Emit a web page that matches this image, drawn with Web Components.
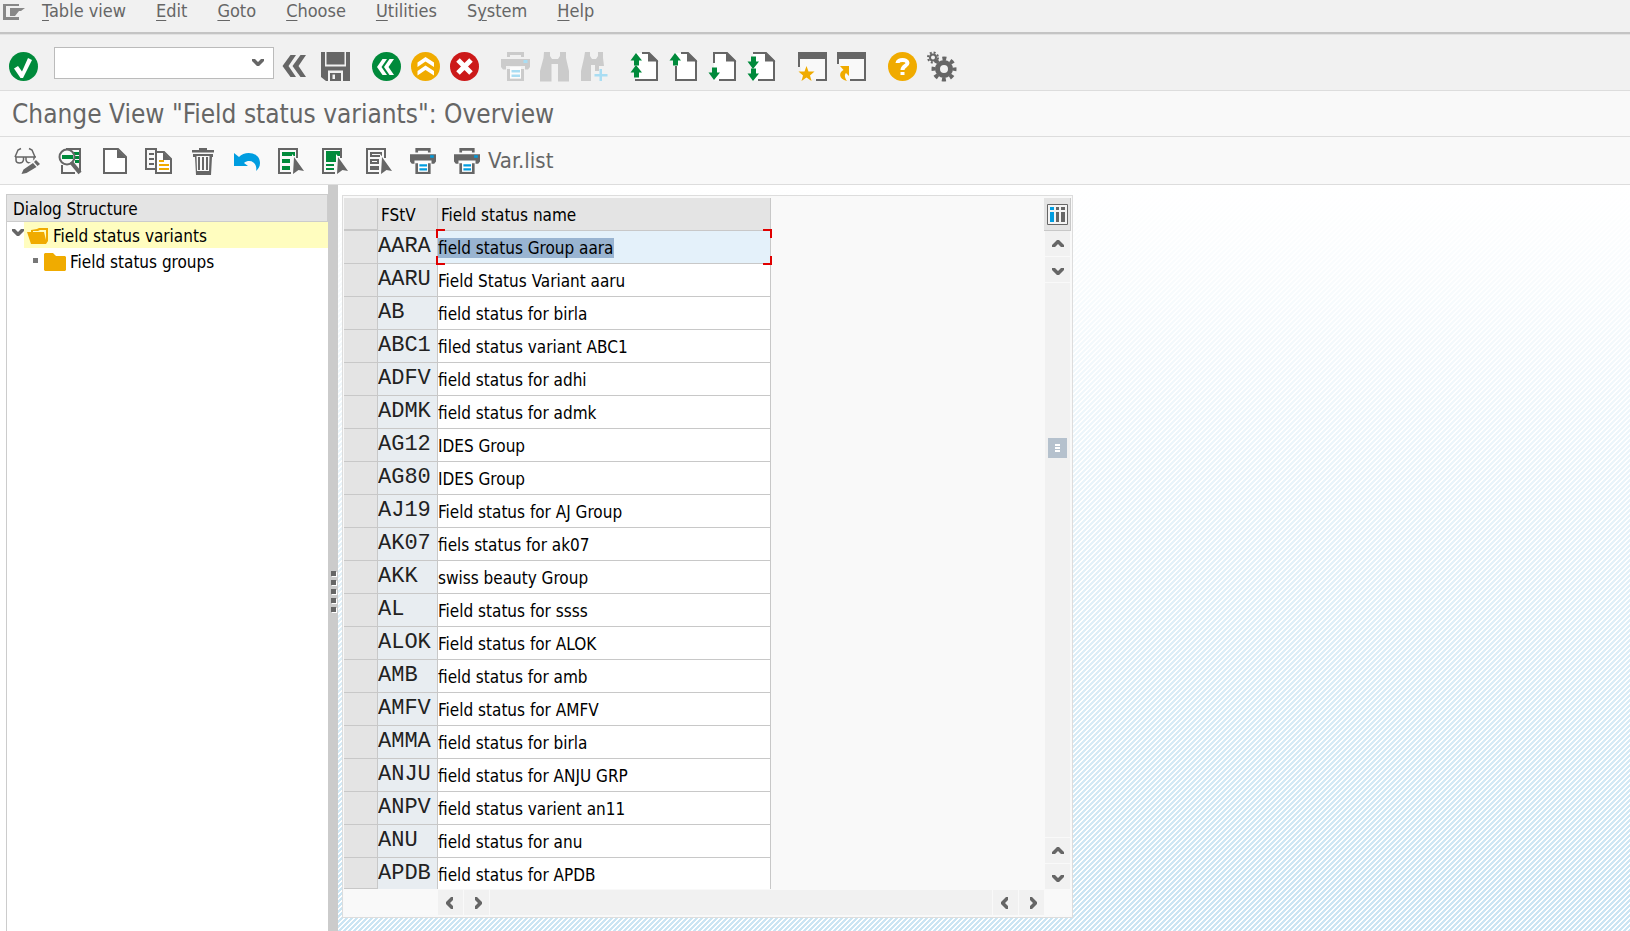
<!DOCTYPE html>
<html lang="en">
<head>
<meta charset="utf-8">
<title>Change View "Field status variants": Overview</title>
<style>
  html, body { margin: 0; }
  body { background: #fff; color: #666; font: 17px/22px "DejaVu Sans Condensed", "DejaVu Sans", Tahoma, sans-serif; }
</style>
</head>
<body>
<sap-window></sap-window>
<script>
const G = '#666', GR = '#008a3b', OR = '#f0ab00', BL = '#009de0';

const arrowUp = (x, y) => `<path fill="${GR}" d="M${x} ${y}l6 7.500h-3v5h-5v-5h-3.500z"/>`;
const arrowDown = (x, y) => `<path fill="${GR}" d="M${x} ${y}l6-7.500h-3v-5h-5v5h-3.500z"/>`;
const page = (x, w) => `<path fill="#fff" d="M${x} 1h${w - 9}l9 8v19.500h-${w}z"/><path fill="${G}" d="M${x + w - 10} 0l10.500 9.500h-10.500z"/>`;
const printer = (a, b) => `<path fill="${a}" d="M6 0h17v5h-3v-2h-11v2h-3zM0 7h29v8l-2 2.500h-3v-3.500h-19v3.500h-3l-2-2.500z"/><path fill="${a}" d="M6 17h3v9.500h11v-9.500h3v12h-17z"/><path fill="#fff" d="M9 15h11v11.500h-11z" opacity=".8"/><path fill="${b}" d="M22.500 8h4v3h-4zM10.500 18h8.500v2.500h-8.500zM10.500 22.500h8.500v2.500h-8.500z"/>`;
const cursor = `<path fill="#f9f9f9" d="M14 6v20h12v-6z"/><path fill="${G}" d="M16 9l10 14-5.500-1-5.500 4z"/>`;
const listFrame = `<path fill="none" stroke="${G}" stroke-width="2" d="M19 10v-9h-18v24h12"/>`;
const CHEVRON = 'M0 0h3l3 3 3-3h3v2l-5 5h-2l-5-5z';

const ICONS = {
  enter: `<circle cx="14.500" cy="14.500" r="14.500" fill="${GR}"/><path fill="#fff" d="M5 16.500l4-2.500 4 5.500 6-13.500 4 2-9 18h-2.500z"/>`,
  collapse: `<path fill="${G}" d="M8.500 3h5.500l-7.500 11 7.500 11h-5.500l-8-11zM18.500 3h5.500l-7.500 11 7.500 11h-5.500l-8-11z"/>`,
  save: `<path fill="${G}" d="M0 0h29v29h-24l-5-4z"/><path fill="#f1f1f1" d="M4 0h1.500v12.500h18v-12.500h1.500v14.500h-21zM7 18.500h15v10.500h-2v-8h-11v8h-2z"/><path fill="#f1f1f1" d="M11.500 22.500h2.500v4.500h-2.500z"/>`,
  back: `<circle cx="14.500" cy="14.500" r="14.500" fill="${GR}"/><path fill="#fff" d="M10.500 7h4.500l-5.500 8 5.500 8h-4.500l-5.500-8zM17.500 7h4.500l-5.500 8 5.500 8h-4.500l-5.500-8z"/>`,
  exit: `<circle cx="14.500" cy="14.500" r="14.500" fill="${OR}"/><path fill="#fff" d="M14.500 5l8.500 5.500v4.500l-8.500-5.500-8 5.500v-4.500zM14.500 13.500l8.500 5.500v4.500l-8.500-5.500-8 5.500v-4.500z"/>`,
  cancel: `<circle cx="14.500" cy="14.500" r="14.500" fill="#cc1919"/><path stroke="#fff" stroke-width="5" d="M8 8l13 13M21 8l-13 13"/>`,
  printOff: printer('#cbcbcb', '#a9ddf3'),
  find: `<path fill="#cbcbcb" d="M4 0h6v4l2 3h6l2-3v-4h6v6l3 13v10.500h-11v-17.500h-6.500v17.500h-11.500v-10.500l3.500-13z"/>`,
  findNext: `<path fill="#cbcbcb" d="M6 0h5v4l2 3h4l2-3v-4h5v6l1 8h-5v5h-4v-6h-4v16h-10v-10l3-13z"/><path fill="#a9ddf3" d="M20.500 17h2.500v5h5.500v2.500h-5.500v4.500h-2.500v-4.500h-5v-2.500h5z"/>`,
  first: page(6, 22) + `<path fill="none" stroke="${G}" stroke-width="2" d="M12 1h7l8 8v19h-22"/>` + arrowUp(6, 1) + arrowUp(6, 13),
  prev: page(6, 22) + `<path fill="none" stroke="${G}" stroke-width="2" d="M12 1h7l8 8v19h-20v-14"/>` + arrowUp(6, 1),
  next: page(6, 22) + `<path fill="none" stroke="${G}" stroke-width="2" d="M6 11v-10h13l8 8v19h-16"/>` + arrowDown(6, 28),
  last: page(6, 22) + `<path fill="none" stroke="${G}" stroke-width="2" d="M6 1h13l8 8v19h-16"/>` + arrowDown(6, 17) + arrowDown(6, 29),
  session: `<path fill="#f9f9f9" d="M1 1h27v27h-27z"/><path fill="${G}" d="M0 0h29v29h-11v-2h9v-20h-25v8h-2z"/><path fill="#f1f1f1" d="M0 15h3v14h-3zM3 27h14v2h-14z"/><path fill="${OR}" d="M8.500 14l2 5.500h6l-4.500 4 1.500 5.500-5-3.500-5 3.500 1.500-5.500-4.500-4h6z"/>`,
  shortcut: `<path fill="#f9f9f9" d="M1 1h27v27h-27z"/><path fill="${G}" d="M0 0h29v29h-16v-2h14v-20h-25v5h-2z"/><path fill="#f1f1f1" d="M0 12h3v17h-3z"/><path fill="${OR}" d="M3 14h9v10l-3-3c-2 2-1 5 1 8-9-2-8-9-3.500-11z"/>`,
  help: `<circle cx="14.500" cy="14.500" r="14.500" fill="${OR}"/><path fill="none" stroke="#fff" stroke-width="4" d="M9.500 11c0-4 10-4 10 0 0 3-5 3-5 7"/><path fill="#fff" d="M12.500 20h4v3h-4z"/>`,
  settings: `<circle cx="17" cy="17" r="6.500" fill="none" stroke="${G}" stroke-width="5"/><circle cx="17" cy="17" r="10.500" fill="none" stroke="${G}" stroke-width="4" stroke-dasharray="4 4.250" stroke-dashoffset="2"/><circle cx="6" cy="5.500" r="3" fill="none" stroke="${G}" stroke-width="2"/><circle cx="6" cy="5.500" r="5" fill="none" stroke="${G}" stroke-width="2" stroke-dasharray="2 1.930"/>`,
  toggle: `<path fill="none" stroke="${G}" stroke-width="1.500" d="M1 9h21M2 9v3q0 3 3.500 3t4-3v-3M12 9v3q.5 3 4 3t4-3v-3M1 9l3-7 3-1.500M21 9l-3-7-3-1.500"/><path fill="#f9f9f9" d="M21 11l-12 9v5h10l7-6z"/><path fill="${G}" d="M22 12l4 4-2.500 2-3.500-4zM19 15l3.500 4-10 6-5 1 2-4.500z"/>`,
  details: `<path fill="none" stroke="${G}" stroke-width="2" d="M8 1h14v22M4 17v8h13"/><path fill="${GR}" d="M16 4h5v3h-5zM17 8h4v3h-4zM17 12h4v3h-4z"/><circle cx="9" cy="9" r="7.500" fill="#f9f9f9" stroke="${G}" stroke-width="2"/><path fill="${GR}" d="M4 7h11v4h-11z"/><path stroke="${G}" stroke-width="4" d="M13 14l9 11"/>`,
  create: `<path fill="#fff" stroke="${G}" stroke-width="2" d="M2 1h14l8 8v16h-22z"/><path fill="${G}" d="M15 1l9 9h-9z"/>`,
  copy: `<path fill="none" stroke="${G}" stroke-width="2" d="M9 21h-9v-20h10v4"/><path fill="${G}" d="M3 5h5v2h-5zM3 10h5v2h-5zM3 15h5v2h-5z"/><path fill="#fff" stroke="${G}" stroke-width="2" d="M10 4h8l7 7v14h-15z"/><path fill="${G}" d="M17 4l8 8h-8z"/><path fill="${OR}" d="M13 12h5v2h-5zM13 16h10v2h-10zM13 20h10v2h-10z"/>`,
  remove: `<path fill="${G}" d="M9 0h8v2h7v2.500h-22v-2.500h7zM3 6h20v3h-1l-1 18h-15l-1-18h-2z"/><path fill="#f9f9f9" d="M6.500 8h13l-.5 15h-12z"/><path fill="${G}" d="M8 9h2v13h-2zM12 9h2v13h-2zM16 9h2v13h-2z"/>`,
  undo: `<path fill="${BL}" d="M0 5l5 4c6-7 21-5 21 6 0 4-2 6-4 8 2-8-6-13-12-8l4 3h-14z"/>`,
  selectAll: listFrame + `<path fill="${GR}" d="M4 4h13v4h-13zM4 11h8v4h-8zM4 18h8v4h-8z"/>` + cursor,
  selectBlock: listFrame + `<path fill="${GR}" d="M4 3h14v5h-3v6h-11zM4 16h8v2h-8zM4 20h8v2h-8z"/>` + cursor,
  deselect: listFrame + `<path fill="none" stroke="${G}" stroke-width="2" d="M5 5h10v3h-10zM5 12h7v3h-7zM5 19h7v2h-7z"/>` + cursor,
  print: printer(G, BL)
};

class SapIcon extends HTMLElement {
  connectedCallback() {
    const box = this.getAttribute('box') || '29 29';
    this.attachShadow({ mode: 'open' }).innerHTML =
      `<style>:host{display:block;flex:none}svg{display:block;width:100%;height:100%;overflow:visible}</style>
       <svg viewBox="0 0 ${box}" aria-hidden="true">${ICONS[this.getAttribute('name')]}</svg>`;
  }
}
customElements.define('sap-icon', SapIcon);

class SapTool extends HTMLElement {
  connectedCallback() {
    const name = this.getAttribute('icon'), box = this.getAttribute('box') || '29 29';
    this.attachShadow({ mode: 'open' }).innerHTML =
      `<style>
        :host{display:block;flex:none}
        button{display:flex;align-items:center;gap:8px;margin:0;padding:0;border:0;background:none;font:inherit;color:inherit;white-space:nowrap}
        sap-icon{width:var(--icon,29px);height:var(--icon,29px)}
      </style>
      <button type="button" aria-label="${this.getAttribute('label')}"><sap-icon name="${name}" box="${box}"></sap-icon><slot></slot></button>`;
  }
}
customElements.define('sap-tool', SapTool);

class SapMenuBar extends HTMLElement {
  connectedCallback() {
    const items = [['', 'T', 'able view'], ['', 'E', 'dit'], ['', 'G', 'oto'], ['', 'C', 'hoose'], ['', 'U', 'tilities'], ['S', 'y', 'stem'], ['', 'H', 'elp']];
    this.attachShadow({ mode: 'open' }).innerHTML =
      `<style>
        :host{display:flex;align-items:flex-start;height:32px;padding-left:3px;background:#f1f1f1;border-bottom:2px solid #c4c4c4;box-shadow:0 1px #e2e2e2;margin-bottom:1px;font-size:18px}
        svg{display:block;width:22px;height:17px;margin:4px 17px 0 0;flex:none}
        nav{display:flex;gap:30px}
        a{color:inherit;text-decoration:none;line-height:22px}
        u{text-underline-offset:3px;text-decoration-thickness:1px}
      </style>
      <svg viewBox="0 0 22 17" aria-hidden="true"><path fill="#888" d="M0 0h16v2h-13v11h13v3h-16zM7 4h15l-4 3h-2l-4 5h-5z"/></svg>
      <nav>${items.map(([a, k, b]) => `<a href="#">${a}<u>${k}</u>${b}</a>`).join('')}</nav>`;
  }
}
customElements.define('sap-menu-bar', SapMenuBar);

class SapCommandBar extends HTMLElement {
  connectedCallback() {
    const groups = [
      [['back', 'Back'], ['exit', 'Exit'], ['cancel', 'Cancel']],
      [['printOff', 'Print'], ['find', 'Find'], ['findNext', 'Find next']],
      [['first', 'First page'], ['prev', 'Previous page'], ['next', 'Next page'], ['last', 'Last page']],
      [['session', 'New session'], ['shortcut', 'Create shortcut']],
      [['help', 'Help'], ['settings', 'Customize layout']]
    ];
    this.attachShadow({ mode: 'open' }).innerHTML =
      `<style>
        :host{display:flex;align-items:center;box-sizing:border-box;height:56px;padding:8px 9px 0;background:#f1f1f1;border-bottom:1px solid #ddd}
        .cmd{display:flex;align-items:center;box-sizing:border-box;width:220px;height:32px;margin:0 8px 8px 16px;background:#fff;border:1px solid #bbb}
        input{flex:1;min-width:0;height:28px;border:0;padding:0 6px;background:none;font:inherit;outline:0}
        .cmd button{width:30px;height:28px;border:0;padding:0;background:none}
        .cmd svg{display:block;width:12px;height:8px;margin:auto}
        .group{display:flex;gap:10px}
        .group + .group{margin-left:22px}
      </style>
      <sap-tool icon="enter" label="Enter"></sap-tool>
      <div class="cmd"><input type="text" aria-label="Command"><button type="button" aria-label="Command history"><svg viewBox="0 0 12 8"><path fill="#666" d="${CHEVRON}"/></svg></button></div>
      <div class="group"><sap-tool icon="collapse" label="Hide command field"></sap-tool><sap-tool icon="save" label="Save"></sap-tool></div>
      ${groups.map(g => `<div class="group">${g.map(([i, l]) => `<sap-tool icon="${i}" label="${l}"></sap-tool>`).join('')}</div>`).join('')}`;
  }
}
customElements.define('sap-command-bar', SapCommandBar);

class SapTitle extends HTMLElement {
  connectedCallback() {
    this.attachShadow({ mode: 'open' }).innerHTML =
      `<style>
        :host{display:block;background:#f9f9f9;border-bottom:1px solid #ddd}
        h1{margin:0;padding:2px 12px 0;font-size:26px;font-weight:400;line-height:43px}
      </style><h1><slot></slot></h1>`;
  }
}
customElements.define('sap-title', SapTitle);

class SapAppBar extends HTMLElement {
  connectedCallback() {
    const tools = [['toggle', 'Display or change'], ['details', 'Details'], ['create', 'New entries'], ['copy', 'Copy as'], ['remove', 'Delete'], ['undo', 'Undo change'], ['selectAll', 'Select all'], ['selectBlock', 'Select block'], ['deselect', 'Deselect all']];
    this.attachShadow({ mode: 'open' }).innerHTML =
      `<style>
        :host{display:flex;align-items:center;gap:18px;height:47px;padding:0 14px;background:#f9f9f9;border-bottom:1px solid #ddd;font-size:22px;--icon:26px}
      </style>
      ${tools.map(([i, l]) => `<sap-tool icon="${i}" label="${l}" box="26 26"></sap-tool>`).join('')}
      <sap-tool icon="print" label="Print field status"></sap-tool>
      <sap-tool icon="print" label="Var.list">Var.list</sap-tool>`;
  }
}
customElements.define('sap-app-bar', SapAppBar);

class SapTree extends HTMLElement {
  connectedCallback() {
    this.attachShadow({ mode: 'open' }).innerHTML =
      `<style>
        :host{display:block;flex:0 1 328px;box-sizing:border-box;padding:9px 0 0 6px;background:#fff;color:#000}
        section{height:100%;box-sizing:border-box;border-left:1px solid #ccc}
        h2{margin:0;padding:2px 6px 0;border:1px solid #ccc;border-left:0;background:#e4e4e4;font-size:17px;font-weight:400;line-height:24px}
        ul{list-style:none;margin:0;padding:0}
        li{display:flex;align-items:center}
        .mark{display:block;width:12px;height:8px;margin:0 0 4px 5px}
        .node{display:flex;flex:1;align-items:center;gap:4px;padding:2px 0 0 3px;line-height:24px;color:inherit;text-decoration:none}
        .node svg{display:block;width:22px;height:18px}
        .open .node{background:#fffdbf}
        .leaf .mark{width:5px;height:5px;margin:0 3px 2px 26px}
      </style>
      <section>
        <h2>Dialog Structure</h2>
        <ul>
          <li class="open"><svg class="mark" viewBox="0 0 12 8"><path fill="#666" d="${CHEVRON}"/></svg>
            <a class="node" href="#"><svg viewBox="0 0 22 18"><path fill="#f0ab00" d="M4 3l6-1 2-1h9v13l-2 3h-15l-4-12h4z"/><path fill="#fffdbf" d="M6 4h5l2-1h6v10l-2-8h-11z"/></svg>Field status variants</a></li>
          <li class="leaf"><svg class="mark" viewBox="0 0 5 5"><path fill="#777" d="M0 0h5v5h-5z"/></svg>
            <a class="node" href="#"><svg viewBox="0 0 22 18"><path fill="#f0ab00" d="M1 0h8l3 3h9l1 1v13l-1 1h-20l-1-1v-16z"/></svg>Field status groups</a></li>
        </ul>
      </section>`;
  }
}
customElements.define('sap-tree', SapTree);

class SapSplitter extends HTMLElement {
  connectedCallback() {
    this.attachShadow({ mode: 'open' }).innerHTML =
      `<style>
        :host{display:flex;flex:0 0 10px;flex-direction:column;align-items:center;justify-content:center;gap:4px;padding-top:66px;background:#cbcbcb}
        i{display:block;width:5px;height:5px;background:#666;box-shadow:1px 1px #fff}
      </style>${'<i></i>'.repeat(5)}`;
  }
}
customElements.define('sap-splitter', SapSplitter);

class SapScroll extends HTMLElement {
  connectedCallback() {
    const v = this.hasAttribute('vertical');
    const arrow = d => `<button type="button" aria-label="Scroll ${d}"><svg class="${d}" viewBox="0 0 12 12"><path fill="#666" d="${{
      up: 'M0 9h3l3-3 3 3h3v-2l-5-5h-2l-5 5z', down: 'M0 4h3l3 3 3-3h3v2l-5 5h-2l-5-5z',
      left: 'M8 0v3l-3 3 3 3v3h-2l-5-5v-2l5-5z', right: 'M4 0v3l3 3-3 3v3h2l5-5v-2l-5-5z'
    }[d]}"/></svg></button>`;
    const pair = v ? arrow('up') + arrow('down') : arrow('left') + arrow('right');
    this.attachShadow({ mode: 'open' }).innerHTML =
      `<style>
        :host{display:flex;gap:1px;flex-direction:${v ? 'column' : 'row'}}
        button,.track{flex:none;width:25px;height:25px;padding:0;border:0;background:#f1f1f1}
        .track{flex:1;${v ? 'height:auto' : 'width:auto'};display:flex;flex-direction:column;align-items:center}
        svg{display:block;width:12px;height:12px;margin:auto}
        .lead{flex:0 1 155px}
        .thumb{display:flex;flex:none;flex-direction:column;align-items:center;justify-content:center;gap:1px;width:19px;height:20px;background:#b5c1cd}
        .thumb i{display:block;width:5px;height:2px;background:#fff}
      </style>
      ${pair}<div class="track">${v ? '<div class="lead"></div><div class="thumb"><i></i><i></i><i></i></div>' : ''}</div>${pair}`;
  }
}
customElements.define('sap-scroll', SapScroll);

class SapGrid extends HTMLElement {
  connectedCallback() {
    const rows = [
      ['AARA', 'field status Group aara'], ['AARU', 'Field Status Variant aaru'], ['AB', 'field status for birla'],
      ['ABC1', 'filed status variant ABC1'], ['ADFV', 'field status for adhi'], ['ADMK', 'field status for admk'],
      ['AG12', 'IDES Group'], ['AG80', 'IDES Group'], ['AJ19', 'Field status for AJ Group'], ['AK07', 'fiels status for ak07'],
      ['AKK', 'swiss beauty Group'], ['AL', 'Field status for ssss'], ['ALOK', 'Field status for ALOK'], ['AMB', 'field status for amb'],
      ['AMFV', 'Field status for AMFV'], ['AMMA', 'field status for birla'], ['ANJU', 'field status for ANJU GRP'],
      ['ANPV', 'field status varient an11'], ['ANU', 'field status for anu'], ['APDB', 'field status for APDB']
    ];
    this.attachShadow({ mode: 'open' }).innerHTML =
      `<style>
        :host{display:grid;grid-template-columns:minmax(0,1fr) 27px;row-gap:1px;flex:0 1 731px;align-self:flex-start;box-sizing:border-box;padding:2px 1px;background:#f9f9f9;border:1px solid #ddd;color:#000}
        table{border-collapse:separate;border-spacing:0;table-layout:fixed;width:427px}
        th,td{box-sizing:border-box;height:33px;padding:0;border:solid #c8c8c8;border-width:0 1px 1px 0;font-weight:400;text-align:left;white-space:nowrap}
        thead th{background:#e4e4e4;padding:2px 0 0 3px}
        thead th:first-child{border-bottom-width:2px}
        .sel{background:#e4e4e4}
        .key{background:#e8edf1;font:22px/22px "Liberation Mono","Courier New",monospace;overflow:hidden;vertical-align:top;padding-top:5px;color:#222}
        .name{background:#fff}
        tr:last-child td{height:31px}
        tr:last-child td:not(.sel){border-bottom:0}
        input{display:block;box-sizing:border-box;width:100%;height:32px;margin:0;padding:2px 0 0 0;border:0;background:none;color:#000;font:inherit;line-height:22px;outline:0}
        tr:last-child input{height:30px}
        input::selection{background:#99b4d1;color:#000}
        .active{position:relative;background:#e4f1fa}
        .active svg{position:absolute;left:-2px;top:-2px;width:calc(100% + 4px);height:36px;pointer-events:none}
        .side{display:flex;flex-direction:column;align-items:center}
        .config{box-sizing:border-box;width:27px;height:33px;margin:0;padding:0;border:solid #c8c8c8;border-width:0 1px 1px 0;background:#e4e4e4;flex:none}
        .config svg{display:block;margin:auto;width:21px;height:21px}
        .side sap-scroll{flex:1}
        .bottom{margin:0 27px 0 94px;grid-column:1/-1}
      </style>
      <table>
        <colgroup><col style="width:34px"><col style="width:60px"><col></colgroup>
        <thead><tr><th></th><th scope="col">FStV</th><th scope="col">Field status name</th></tr></thead>
        <tbody>${rows.map(([k, n], i) => `<tr><td class="sel"></td><td class="key">${k}</td><td class="name${i ? '' : ' active'}"><input type="text" aria-label="Field status name ${k}" value="${n}">${i ? '' : '<svg viewBox="0 0 337 36" preserveAspectRatio="none"><path fill="none" stroke="#e00000" stroke-width="2" d="M9 1H1v8M328 1h8v8M9 35H1v-8M328 35h8v-8"/></svg>'}</td></tr>`).join('')}</tbody>
      </table>
      <div class="side">
        <button class="config" type="button" aria-label="Configuration"><svg viewBox="0 0 21 21"><path fill="#f4f4f4" stroke="#666" d="M.5 .5h20v20h-20z"/><path fill="#009de0" d="M3 3h4v3h-4zM3 8h4v10h-4z"/><path fill="#666" d="M9 3h3v3h-3zM9 8h3v10h-3zM14 3h4v3h-4zM14 8h4v10h-4z"/></svg></button>
        <sap-scroll vertical></sap-scroll>
      </div>
      <sap-scroll class="bottom"></sap-scroll>`;
    const first = this.shadowRoot.querySelector('.active input');
    first.focus({ preventScroll: true });
    first.select();
  }
}
customElements.define('sap-grid', SapGrid);

class SapWorkArea extends HTMLElement {
  connectedCallback() {
    this.attachShadow({ mode: 'open' }).innerHTML =
      `<style>
        :host{display:flex;flex:1;min-width:0;position:relative;padding:10px 4px 13px}
        .backdrop{position:absolute;inset:0;width:100%;height:100%}
        ::slotted(*){position:relative}
      </style>
      <svg class="backdrop" aria-hidden="true">
        <defs>
          <pattern id="hatch" width="5" height="5" patternUnits="userSpaceOnUse">
            <path fill="#cbe5f3" shape-rendering="crispEdges" d="M0 0h3v1h-3zM0 1h2v1h-2zM4 1h1v1h-1zM0 2h1v1h-1zM3 2h2v1h-2zM2 3h3v1h-3zM1 4h3v1h-3z"/>
          </pattern>
          <linearGradient id="fade" x1="0" y1="0" x2="0" y2="1"><stop offset="0" stop-color="#fff"/><stop offset=".95" stop-color="#fff" stop-opacity="0"/></linearGradient>
        </defs>
        <rect width="100%" height="100%" fill="url(#hatch)"/>
        <rect width="100%" height="100%" fill="url(#fade)"/>
      </svg>
      <slot></slot>`;
  }
}
customElements.define('sap-work-area', SapWorkArea);

class SapWindow extends HTMLElement {
  connectedCallback() {
    this.attachShadow({ mode: 'open' }).innerHTML =
      `<style>
        :host{display:flex;flex-direction:column;min-height:100vh}
        main{display:flex;flex:1}
      </style>
      <sap-menu-bar></sap-menu-bar>
      <sap-command-bar></sap-command-bar>
      <sap-title>Change View "Field status variants": Overview</sap-title>
      <sap-app-bar></sap-app-bar>
      <main>
        <sap-tree></sap-tree>
        <sap-splitter></sap-splitter>
        <sap-work-area><sap-grid></sap-grid></sap-work-area>
      </main>`;
  }
}
customElements.define('sap-window', SapWindow);
</script>
</body>
</html>
